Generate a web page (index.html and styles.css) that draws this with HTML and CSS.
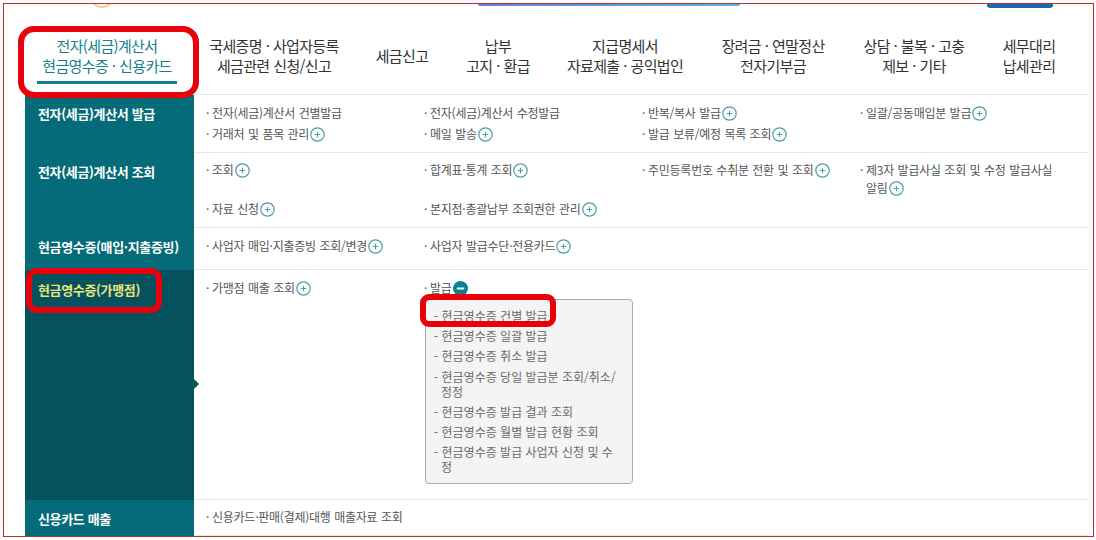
FILE: index.html
```html
<!DOCTYPE html>
<html lang="ko">
<head>
    <meta charset="UTF-8">
    <meta name="viewport" content="width=device-width, initial-scale=1.0">
    <title>전자(세금)계산서 메뉴</title>
    <link rel="stylesheet" href="styles.css">
</head>
<body>

<svg class="defs" width="0" height="0">
    <symbol id="plus" viewBox="0 0 15 15">
        <circle cx="7.5" cy="7.5" r="6.7" fill="#fff" stroke="#4f9ea3" stroke-width="1.2"/>
        <path d="M4.7 7.5h5.6M7.5 4.7v5.6" stroke="#4f9ea3" stroke-width="1.1"/>
    </symbol>
    <symbol id="minus" viewBox="0 0 14 14">
        <circle cx="7" cy="7" r="7" fill="#0b8291"/>
        <path d="M3.6 7h6.8" stroke="#fff" stroke-width="1.8"/>
    </symbol>
</svg>

<div class="frame">
    <div class="top-strip">
        <span class="top-logo"></span>
        <span class="top-search"></span>
        <span class="top-btn"></span>
    </div>

    <div class="tabs">
        <a href="#" class="tab active"><span class="tab-label">전자(세금)계산서<br>현금영수증 · 신용카드</span></a>
        <a href="#" class="tab"><span class="tab-label">국세증명 · 사업자등록<br>세금관련 신청/신고</span></a>
        <a href="#" class="tab"><span class="tab-label">세금신고</span></a>
        <a href="#" class="tab"><span class="tab-label">납부<br>고지 · 환급</span></a>
        <a href="#" class="tab"><span class="tab-label">지급명세서<br>자료제출 · 공익법인</span></a>
        <a href="#" class="tab"><span class="tab-label">장려금 · 연말정산<br>전자기부금</span></a>
        <a href="#" class="tab"><span class="tab-label">상담 · 불복 · 고충<br>제보 · 기타</span></a>
        <a href="#" class="tab"><span class="tab-label">세무대리<br>납세관리</span></a>
    </div>

    <div class="menu-row">
        <div class="row-title">전자(세금)계산서 발급</div>
        <ul class="row-items">
            <li class="item">전자(세금)계산서 건별발급</li>
            <li class="item">전자(세금)계산서 수정발급</li>
            <li class="item">반복/복사 발급<svg class="ico"><use href="#plus"/></svg></li>
            <li class="item">일괄/공동매입분 발급<svg class="ico"><use href="#plus"/></svg></li>
            <li class="item">거래처 및 품목 관리<svg class="ico"><use href="#plus"/></svg></li>
            <li class="item">메일 발송<svg class="ico"><use href="#plus"/></svg></li>
            <li class="item">발급 보류/예정 목록 조회<svg class="ico"><use href="#plus"/></svg></li>
        </ul>
    </div>

    <div class="menu-row tight">
        <div class="row-title">전자(세금)계산서 조회</div>
        <ul class="row-items">
            <li class="item">조회<svg class="ico"><use href="#plus"/></svg></li>
            <li class="item">합계표·통계 조회<svg class="ico"><use href="#plus"/></svg></li>
            <li class="item">주민등록번호 수취분 전환 및 조회<svg class="ico"><use href="#plus"/></svg></li>
            <li class="item">제3자 발급사실 조회 및 수정 발급사실 알림<svg class="ico"><use href="#plus"/></svg></li>
            <li class="item">자료 신청<svg class="ico"><use href="#plus"/></svg></li>
            <li class="item">본지점·총괄납부 조회권한 관리<svg class="ico"><use href="#plus"/></svg></li>
        </ul>
    </div>

    <div class="menu-row short">
        <div class="row-title">현금영수증(매입·지출증빙)</div>
        <ul class="row-items">
            <li class="item">사업자 매입·지출증빙 조회/변경<svg class="ico"><use href="#plus"/></svg></li>
            <li class="item">사업자 발급수단·전용카드<svg class="ico"><use href="#plus"/></svg></li>
        </ul>
    </div>

    <div class="menu-row open">
        <div class="row-title">현금영수증(가맹점)</div>
        <ul class="row-items">
            <li class="item">가맹점 매출 조회<svg class="ico"><use href="#plus"/></svg></li>
            <li class="item">발급<svg class="ico"><use href="#minus"/></svg>
                <ul class="popup">
                    <li>- 현금영수증 건별 발급</li>
                    <li>- 현금영수증 일괄 발급</li>
                    <li>- 현금영수증 취소 발급</li>
                    <li>- 현금영수증 당일 발급분 조회/취소/정정</li>
                    <li>- 현금영수증 발급 결과 조회</li>
                    <li>- 현금영수증 월별 발급 현황 조회</li>
                    <li>- 현금영수증 발급 사업자 신청 및 수정</li>
                </ul>
            </li>
        </ul>
    </div>

    <div class="menu-row tight">
        <div class="row-title">신용카드 매출</div>
        <ul class="row-items">
            <li class="item">신용카드·판매(결제)대행 매출자료 조회</li>
        </ul>
    </div>

    <!-- 빨간 강조 표시 -->
    <div class="mark mark-tab"></div>
    <div class="mark mark-side"></div>
    <div class="mark mark-popup"></div>
</div>

</body>
</html>
```

FILE: styles.css
```css
* {
    margin: 0;
    padding: 0;
    box-sizing: border-box;
}

body {
    background: #fff;
    font-family: "Noto Sans CJK KR", "Noto Sans", sans-serif;
    color: #555;
}

li {
    list-style: none;
}

a {
    text-decoration: none;
    color: inherit;
}

.defs {
    position: absolute;
}

.frame {
    position: relative;
    width: 1091px;
    height: 534px;
    margin: 3px 0 0 3px;
    border: 1px solid #b5302e;
    overflow: hidden;
}

.top-strip {
    display: flex;
    height: 4px;
}

.top-logo {
    width: 24px;
    height: 24px;
    margin: -20px 0 0 86px;
    border: 2px solid #f0cf90;
    border-radius: 50%;
}

.top-search {
    width: 262px;
    height: 2px;
    margin-left: 364px;
    border-radius: 0 0 2px 2px;
    background: linear-gradient(90deg, #6a7fd8, #58b6e0);
}

.top-btn {
    width: 66px;
    height: 4px;
    margin-left: 247px;
    border-radius: 0 0 3px 3px;
    background: #1b69ad;
}

.tabs {
    display: grid;
    grid-template-columns: 164px 170px 86px 106px 148px 148px 134px 96px;
    height: 87px;
    margin: 0 5px 0 21px;
    border-bottom: 1px solid #e6e6e6;
    font-size: 15px;
    line-height: 20px;
    letter-spacing: -0.65px;
    word-spacing: 0.2px;
    color: #333;
    text-align: center;
}

.tab {
    display: flex;
    justify-content: center;
    align-items: center;
    height: 40px;
    margin-top: 28px;
}

.tab-label {
    display: block;
}

.tab.active {
    color: #15808c;
}

.tab.active .tab-label {
    margin-top: 7px;
    padding: 0 5px 5px;
    border-bottom: 3px solid #12818f;
}

.menu-row {
    display: flex;
    margin: 0 5px 0 21px;
}

.row-title {
    flex: none;
    width: 169px;
    padding: 9px 0 0 13px;
    background: #056b78;
    color: #fff;
    font-size: 13px;
    font-weight: 700;
    line-height: 20px;
    letter-spacing: -0.35px;
    white-space: nowrap;
}

.row-items {
    flex: 1;
    display: grid;
    grid-template-columns: repeat(4, 218px);
    align-items: start;
    row-gap: 3px;
    padding: 9px 0 9px 12px;
    border-bottom: 1px solid #e6e6e6;
    font-size: 12px;
    line-height: 18px;
    letter-spacing: -0.25px;
    word-spacing: 0.5px;
}

.tight .row-items {
    padding-top: 8px;
}

.item {
    padding: 0 20px 0 6px;
    text-indent: -6px;
    word-break: keep-all;
}

.item::before {
    content: "·";
    display: inline-block;
    width: 6px;
    text-indent: 0;
}

.ico {
    width: 15px;
    height: 15px;
    margin-left: 1px;
    vertical-align: -3px;
}

.short .row-items {
    min-height: 42px;
}

.open .row-title {
    position: relative;
    padding-top: 10px;
    background: #05525e;
    color: #ece47c;
}

.open .row-title::after {
    content: "";
    position: absolute;
    left: 100%;
    top: 109px;
    border-left: 5px solid #05525e;
    border-top: 5px solid transparent;
    border-bottom: 5px solid transparent;
}

.open .row-items {
    padding-bottom: 15px;
}

.popup {
    width: 208px;
    margin: 2px 0 0 -5px;
    padding: 8px 15px 9px 15px;
    border: 1px solid #aaa;
    border-radius: 4px;
    background: #f4f4f4;
    color: #6a6a6a;
    font-size: 12px;
    line-height: 15px;
    letter-spacing: 0;
    word-spacing: 0;
    text-indent: 0;
    word-break: normal;
}

.popup li {
    margin-bottom: 5.2px;
    text-indent: -7px;
}

.popup li:last-child {
    margin-bottom: 0;
}

.mark {
    position: absolute;
    border: 6px solid #e8000b;
}

.mark-tab {
    left: 14px;
    top: 22px;
    width: 181px;
    height: 72px;
    border-radius: 16px;
}

.mark-side {
    left: 22px;
    top: 264px;
    width: 136px;
    height: 45px;
    border-radius: 11px;
}

.mark-popup {
    left: 416px;
    top: 290px;
    width: 136px;
    height: 33px;
    border-radius: 9px;
}
```
